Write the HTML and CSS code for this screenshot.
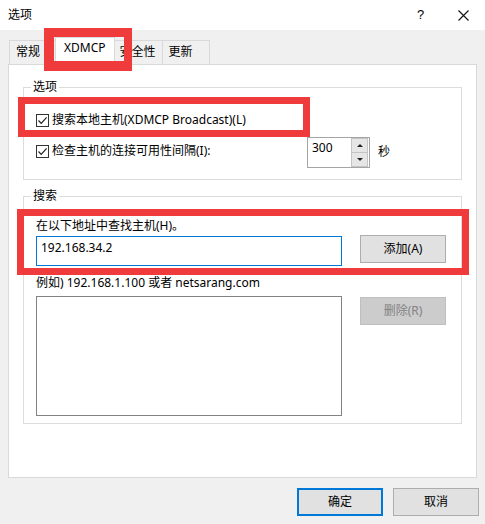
FILE: index.html
```html
<!DOCTYPE html>
<html lang="zh-CN">
<head>
<meta charset="utf-8">
<title>选项</title>
<link rel="stylesheet" href="styles.css">
</head>
<body>
<div class="window">
  <div class="titlebar">
    <span class="title">选项</span>
    <span class="help">?</span>
    <span class="close"><svg width="11" height="11" viewBox="0 0 11 11"><path d="M0.5 0.5L10.5 10.5M10.5 0.5L0.5 10.5" stroke="#111" stroke-width="1.1" fill="none"/></svg></span>
  </div>
  <div class="tabbar">
    <div class="tab">常规</div>
    <div class="tab selected">XDMCP</div>
    <div class="tab">安全性</div>
    <div class="tab last">更新</div>
  </div>
  <div class="panel">
    <fieldset class="group group-options">
      <legend>选项</legend>
      <label class="check row1"><span class="box"><svg width="11" height="11" viewBox="0 0 11 11"><path d="M1.5 5.5L4.2 8.3L9.6 2.3" stroke="#222" stroke-width="1.2" fill="none"/></svg></span><span>搜索本地主机(XDMCP Broadcast)(L)</span></label>
      <div class="row2">
        <label class="check interval"><span class="box"><svg width="11" height="11" viewBox="0 0 11 11"><path d="M1.5 5.5L4.2 8.3L9.6 2.3" stroke="#222" stroke-width="1.2" fill="none"/></svg></span><span>检查主机的连接可用性间隔(I):</span></label>
        <div class="spin">
          <span class="spin-value">300</span>
          <div class="spin-btns">
            <span class="spin-btn"><span class="tri-up"></span></span>
            <span class="spin-btn"><span class="tri-down"></span></span>
          </div>
        </div>
        <span class="unit">秒</span>
      </div>
    </fieldset>
    <fieldset class="group group-search">
      <legend>搜索</legend>
      <div class="hint">在以下地址中查找主机(H)。</div>
      <div class="input-row">
        <div class="input">192.168.34.2</div>
        <button class="btn side">添加(A)</button>
      </div>
      <div class="example">例如) 192.168.1.100 或者 netsarang.com</div>
      <div class="list-row">
        <div class="list"></div>
        <button class="btn side disabled" disabled>删除(R)</button>
      </div>
    </fieldset>
  </div>
  <div class="footer">
    <button class="btn primary">确定</button>
    <button class="btn">取消</button>
  </div>
  <div class="mark mark-tab"></div>
  <div class="mark mark-broadcast"></div>
  <div class="mark mark-search"></div>
</div>
</body>
</html>
```
FILE: styles.css
```css
* { box-sizing: border-box; }
html, body { margin: 0; padding: 0; }
body {
  width: 485px;
  height: 524px;
  overflow: hidden;
  background: #f0f0f0;
  font-family: "Noto Sans", "Noto Sans CJK SC", sans-serif;
  font-size: 12px;
  line-height: 16px;
  color: #000;
}
.window { position: relative; width: 485px; height: 524px; }

.titlebar {
  height: 30px;
  background: #fff;
  display: flex;
  align-items: center;
  padding-left: 8px;
}
.title { flex: 1; }
.help { width: 6px; font-size: 13px; margin-right: 35px; font-family: "Liberation Sans", sans-serif; }
.close { width: 11px; height: 11px; margin-right: 16px; display: flex; }

.tabbar {
  position: relative;
  z-index: 1;
  display: flex;
  align-items: flex-end;
  height: 27px;
  margin-top: 7px;
  padding-left: 9px;
}
.tab {
  height: 24px;
  min-width: 48px;
  padding: 0 6px;
  border-top: 1px solid #d9d9d9;
  border-left: 1px solid #d9d9d9;
  background: #f0f0f0;
  line-height: 22px;
}
.tab.last { border-right: 1px solid #d9d9d9; }
.tab.selected {
  height: 28px;
  min-width: 59px;
  margin: 0 -2px -1px;
  padding: 2px 8px 0;
  border-right: 1px solid #d9d9d9;
  background: #fff;
  line-height: 16px;
  position: relative;
}

.panel {
  height: 414px;
  margin: 0 8px;
  background: #fff;
  border: 1px solid #d9d9d9;
  padding: 0 14px;
}

.group {
  margin: 14px 0 0;
  padding: 0 12px 11px;
  border: 1px solid #dcdcdc;
  min-width: 0;
}
.group legend {
  padding: 0 2px;
  margin-left: -5px;
  line-height: 16px;
}
.group-search { margin-top: 8px; padding-bottom: 7px; }

.check { display: flex; align-items: center; height: 16px; white-space: nowrap; }
.box {
  width: 13px;
  height: 13px;
  border: 1px solid #333;
  background: #fff;
  margin-right: 3px;
  display: flex;
  flex-shrink: 0;
}
.row1 { margin-top: 17px; }
.row2 { display: flex; align-items: flex-start; margin-top: 9px; }
.interval { width: 271px; margin-top: 6px; }

.spin {
  display: flex;
  width: 63px;
  height: 31px;
  border: 1px solid #a5a5a5;
  background: #fff;
}
.spin-value { flex: 1; padding: 2px 0 0 4px; }
.spin-btns { width: 17px; margin-right: 1px; display: flex; flex-direction: column; }
.spin-btn {
  flex: 1;
  background: #e6e6e6;
  border: 1px solid #c4c4c4;
  display: flex;
  align-items: center;
  justify-content: center;
}
.spin-btn + .spin-btn { border-top: none; }
.tri-up { width: 0; height: 0; border-left: 3px solid transparent; border-right: 3px solid transparent; border-bottom: 3px solid #222; }
.tri-down { width: 0; height: 0; border-left: 3px solid transparent; border-right: 3px solid transparent; border-top: 3px solid #222; }
.unit { margin: 7px 0 0 8px; }

.hint { margin-top: 14px; }
.input-row { display: flex; align-items: flex-start; margin-top: 1px; }
.input {
  width: 306px;
  height: 30px;
  margin-top: 1px;
  border: 1px solid #0078d7;
  background: #fff;
  padding: 3px 0 0 4px;
}
.example { margin-top: 9px; white-space: nowrap; }
.list-row { display: flex; align-items: flex-start; margin-top: 5px; }
.list { width: 306px; height: 120px; border: 1px solid #828282; background: #fff; }

.btn {
  width: 86px;
  height: 28px;
  padding: 0;
  background: #e1e1e1;
  border: 1px solid #adadad;
  font: inherit;
  color: #000;
}
.btn.side { margin-left: 18px; }
.list-row .btn { margin-top: 1px; }
.btn.disabled { background: #cccccc; border-color: #bfbfbf; color: #838383; }
.btn.primary { border: 2px solid #0078d7; }

.footer {
  display: flex;
  justify-content: flex-end;
  gap: 10px;
  padding-right: 6px;
  margin-top: 10px;
}

.mark {
  position: absolute;
  z-index: 5;
  border: 7px solid #ef3b3b;
  pointer-events: none;
}
.mark-tab { left: 44px; top: 28px; width: 88px; height: 43px; border-width: 9px 8px 10px 10px; }
.mark-broadcast { left: 18px; top: 97px; width: 292px; height: 40px; }
.mark-search { left: 17px; top: 209px; width: 452px; height: 66px; }
```
